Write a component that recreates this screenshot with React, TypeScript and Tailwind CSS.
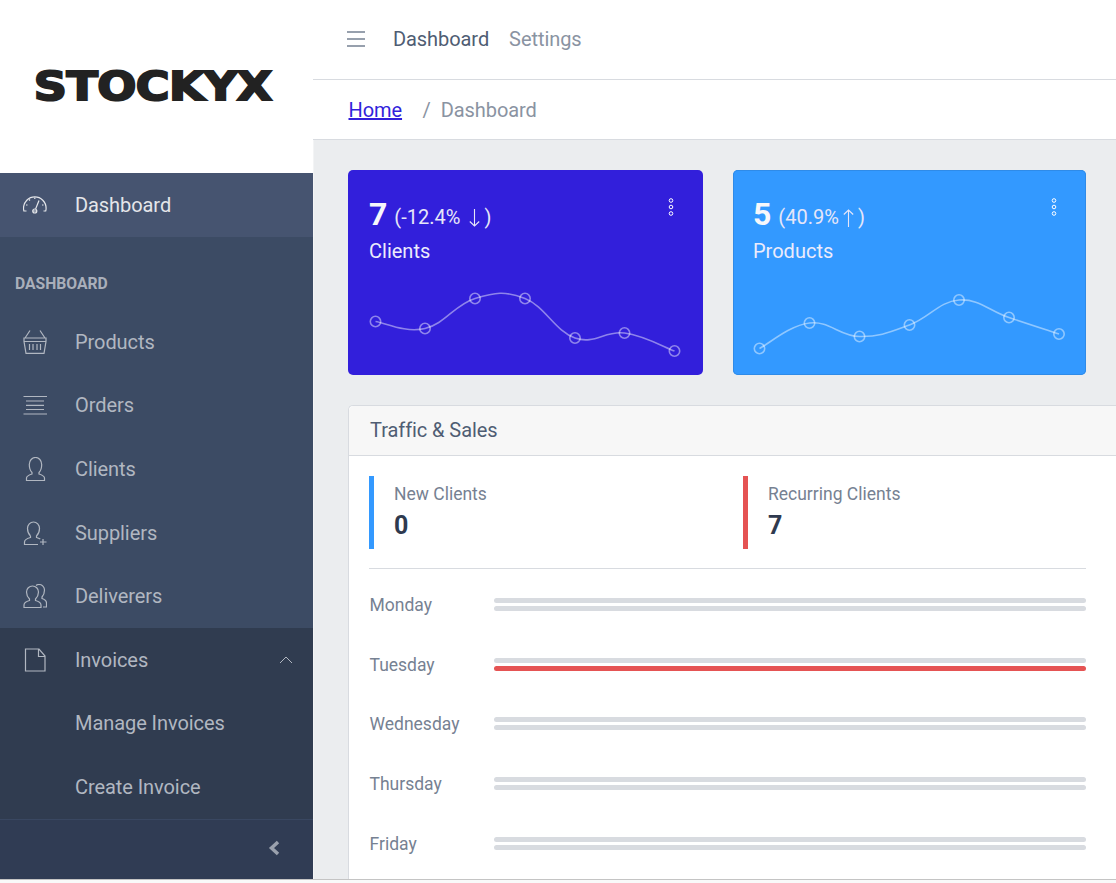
// Stockyx dashboard: sidebar, top bar, breadcrumb, two stat cards and the traffic card.
import type { ReactNode } from 'react';

type Point = [number, number];

const CLIENT_POINTS: Point[] = [[375.5, 320.5], [425, 327.5], [475, 297.5], [525, 297.5], [575, 337], [624.5, 332], [674.5, 350]];
const PRODUCT_POINTS: Point[] = [[759.5, 347.5], [809.5, 322], [859.5, 335.5], [909.5, 324], [959, 299], [1009, 316.5], [1059, 333]];
const DAYS = ['Monday', 'Tuesday', 'Wednesday', 'Thursday', 'Friday'];

// Same sort of curve the chart library draws: cubic segments with tension 0.4.
function smoothPath(points: Point[]) {
  let d = `M${points[0][0]} ${points[0][1]}`;
  for (let i = 0; i < points.length - 1; i++) {
    const p0 = points[Math.max(i - 1, 0)];
    const p1 = points[i];
    const p2 = points[i + 1];
    const p3 = points[Math.min(i + 2, points.length - 1)];
    const c1x = p1[0] + (p2[0] - p0[0]) * 0.2;
    const c1y = p1[1] + (p2[1] - p0[1]) * 0.2;
    const c2x = p2[0] - (p3[0] - p1[0]) * 0.2;
    const c2y = p2[1] - (p3[1] - p1[1]) * 0.2;
    d += ` C${c1x} ${c1y} ${c2x} ${c2y} ${p2[0]} ${p2[1]}`;
  }
  return d;
}

function Icon({ children }: { children: ReactNode }) {
  return (
    <svg viewBox="0 0 24 24" fill="none" stroke="currentColor" strokeWidth="1.2" className="h-6 w-6 shrink-0">
      {children}
    </svg>
  );
}

function NavItem({ icon, label, active, right }: { icon?: ReactNode; label: string; active?: boolean; right?: ReactNode }) {
  return (
    <div className={`flex h-[63.6px] items-center pl-[23px] pr-5 ${active ? 'bg-[#465470] text-[#e4e6ea]' : 'text-[#b1b7c1]'}`}>
      <div className="w-[52px] shrink-0">{icon}</div>
      <span className="text-[20px] tracking-[-0.07px]">{label}</span>
      {right && <div className="ml-auto">{right}</div>}
    </div>
  );
}

function Sidebar() {
  return (
    <aside className="flex w-[313px] shrink-0 flex-col bg-[#3c4b64]">
      <div className="flex h-[173px] items-center justify-center bg-white pb-[1px] pr-[7px]">
        <span className="scale-x-[1.18] font-['DejaVu_Sans',sans-serif] text-[39px] leading-none font-bold tracking-[-0.5px] text-[#222222] [-webkit-text-stroke:2px_#222222]">
          STOCKYX
        </span>
      </div>
      <NavItem
        active
        label="Dashboard"
        icon={
          <Icon>
            <path d="M3.500 18H.9a12 12 0 0 1-.4-2.800 11.300 11.300 0 0 1 22.600 0c0 1-.1 1.900-.4 2.800H20.500M9.500 18h4.500M12.600 16 16 7.500" />
            <circle cx="11.800" cy="18" r="2" />
            <path d="M11.800 4.500V6M6 6.500l1 1M3 12h1.500M19 12h1.500" />
          </Icon>
        }
      />
      <div className="flex h-[73.4px] items-center pl-[15px] pt-[20px] text-[15.7px] font-bold text-[#a9afba]">DASHBOARD</div>
      <NavItem
        label="Products"
        icon={
          <Icon>
            <path d="M1 8h22v3.500L21 23.400H3L1 11.500zM1.500 11.500h21M2 8 7 .5M22 8 17 .5" />
            <path d="M6.500 14v6M10 14v6M14 14v6M17.500 14v6" />
          </Icon>
        }
      />
      <NavItem
        label="Orders"
        icon={
          <Icon>
            <path d="M.5 3.500h23.500M3 8h18M3 12.300h18M3 16.500h18M.5 21h23.500" />
          </Icon>
        }
      />
      <NavItem
        label="Clients"
        icon={
          <Icon>
            <path d="M9 15.500C7 13.500 6.300 10.500 6.300 7.500a5.700 6.500 0 0 1 12.400 0c0 3-.7 6-2.700 8V17c3 1 5.500 2 5.500 4v2.500H3.500V21c0-2 2.500-3 5.500-4z" />
          </Icon>
        }
      />
      <NavItem
        label="Suppliers"
        icon={
          <Icon>
            <path d="M7.500 15C5.500 13 4.500 10.500 4.500 7.500a6 6.500 0 0 1 12 0c0 3-1 5.500-3 7.500v1.500c1.500.4 2.800.9 3.800 1.500M7.500 15v1.500c-3 .8-6 2-6 4.500v2.500H15" />
            <path d="M20 18v6M17 21h6.500" />
          </Icon>
        }
      />
      <NavItem
        label="Deliverers"
        icon={
          <Icon>
            <path d="M6.500 15c-2-2-3-4-3-7a6 6 0 0 1 12 0c0 3-1 5-3 7v1.500c3 .8 5.500 2 5.500 4.500v2.500H1V21c0-2.500 2.500-3.700 5.500-4.500z" />
            <path d="M13 1.500c1-.7 2-1 3-1A5.500 5.500 0 0 1 21.500 6c0 3-.8 5-2.500 7v1.500c2.500.8 4.500 2 4.500 4.500v4H20" />
          </Icon>
        }
      />
      <div className="bg-[#303c50]">
        <NavItem
          label="Invoices"
          icon={
            <Icon>
              <path d="M2.500 1h13.500l6 7v15H2.500zM15.500 1v7.500H22" />
            </Icon>
          }
          right={
            <svg viewBox="0 0 14 8" fill="none" stroke="currentColor" strokeWidth="1" className="h-2 w-[14px]">
              <path d="M1 7l6-6 6 6" />
            </svg>
          }
        />
        <NavItem label="Manage Invoices" />
        <NavItem label="Create Invoice" />
      </div>
      <div className="flex flex-1 items-center justify-end border-t border-[#394761] bg-[#303c54] pb-[3px] pr-[33px] text-[#9aa1ad]">
        <svg viewBox="0 0 12 16" fill="none" stroke="currentColor" strokeWidth="3.500" className="h-4 w-3">
          <path d="M10 2 3.500 8l6.500 6" />
        </svg>
      </div>
    </aside>
  );
}

function TopBar() {
  return (
    <>
      <header className="flex h-[80px] shrink-0 items-center border-b border-[#d8dbe0] bg-white pb-[2px] pl-[34px] text-[20px] tracking-[-0.07px]">
        <svg viewBox="0 0 18 16" fill="none" stroke="#768192" strokeWidth="1.300" className="h-4 w-[18px]">
          <path d="M0 1h18M0 8h18M0 15h18" />
        </svg>
        <span className="ml-[28px] text-[#4f5d73]">Dashboard</span>
        <span className="ml-[20px] text-[#8a93a2]">Settings</span>
      </header>
      <nav className="flex h-[60px] shrink-0 items-center border-b border-[#d8dbe0] bg-white pl-[35.5px] text-[20px] tracking-[-0.07px]">
        <a className="text-[#321fdb] underline">Home</a>
        <span className="ml-[20.5px] text-[#8a93a2]">/</span>
        <span className="ml-[10px] text-[#8a93a2]">Dashboard</span>
      </nav>
    </>
  );
}

function Arrow({ up }: { up?: boolean }) {
  return (
    <svg
      viewBox="0 0 11 18"
      fill="none"
      stroke="currentColor"
      strokeWidth="1.100"
      className={`inline-block h-[18px] w-[11px] align-[-3px] ${up ? 'ml-[4px] mr-[4px]' : 'ml-[8.5px] mr-[4.5px]'}`}
    >
      <path d={up ? 'M5.500 18V1M.8 5.500 5.500 1l4.700 4.500' : 'M5.500 0v17M.8 12.500 5.500 17l4.700-4.500'} />
    </svg>
  );
}

function StatCard({ value, change, up, label, bg, inset, points, viewBox }: {
  value: string;
  change: string;
  up?: boolean;
  label: string;
  bg: string;
  inset: string;
  points: Point[];
  viewBox: string;
}) {
  return (
    <div className={`flex h-[204.5px] flex-col justify-between rounded-[5px] text-white ${bg}`}>
      <div className={`flex justify-between pr-[29px] pt-[21px] ${inset}`}>
        <div>
          <div className="flex h-[44px] items-center">
            <span className="mt-[2px] text-[32px] leading-none font-bold text-[#f7f7fb]">{value}</span>
            <span className="ml-[7px] mt-[8px] text-[20px] leading-none text-[#e6e6f8]">
              ({change}
              <Arrow up={up} />)
            </span>
          </div>
          <div className="mt-[1px] text-[20px] leading-[30px] text-[#ecebfb]">{label}</div>
        </div>
        <svg viewBox="0 0 6 18" fill="none" stroke="currentColor" strokeWidth="1" className="mt-[7px] h-[18px] w-[6px]">
          <circle cx="3" cy="2.500" r="1.800" />
          <circle cx="3" cy="9" r="1.800" />
          <circle cx="3" cy="15.500" r="1.800" />
        </svg>
      </div>
      <svg viewBox={viewBox} className="h-[90px] w-full shrink-0" fill="none" stroke="rgba(255,255,255,0.45)" strokeWidth="1.600">
        <path d={smoothPath(points)} />
        {points.map(([x, y]) => (
          <circle key={x} cx={x} cy={y} r="5.200" />
        ))}
      </svg>
    </div>
  );
}

function Legend({ label, value, bar }: { label: string; value: string; bar: string }) {
  return (
    <div className={`w-[374px] shrink-0 border-l-[5px] pl-[20px] ${bar}`}>
      <div className="pt-[5px] text-[17.5px] leading-[26px] text-[#768192]">{label}</div>
      <div className="mt-[4px] text-[25px] leading-[30px] font-bold text-[#2f3a4f]">{value}</div>
    </div>
  );
}

function DayRow({ day, highlight }: { day: string; highlight?: boolean }) {
  return (
    <div className="flex h-[59.75px] items-center">
      <div className="mt-[1px] w-[125px] shrink-0 pl-[0.5px] text-[17.5px] text-[#768192]">{day}</div>
      <div className="flex flex-1 flex-col gap-[3px]">
        <div className="h-[5px] rounded-[3px] bg-[#d8dbe0]" />
        <div className={`h-[5px] rounded-[3px] ${highlight ? 'bg-[#e55353]' : 'bg-[#d8dbe0]'}`} />
      </div>
    </div>
  );
}

export default function App() {
  return (
    <div className="h-[883px] w-[1116px] overflow-hidden bg-[#f9f9f9] font-['Roboto',sans-serif]">
      <div className="flex h-[880px] border-b border-[#c4c4c4]">
        <Sidebar />
        <div className="flex min-w-0 flex-1 flex-col">
          <TopBar />
          <main className="min-h-0 flex-1 overflow-hidden border-l border-[#f3f4f5] bg-[#ebedef] pl-[34px] pr-[30px] pt-[30px]">
            <div className="grid grid-cols-[355px_1fr] gap-[30px]">
              <StatCard
                value="7"
                change="-12.4%"
                label="Clients"
                bg="bg-[#321fdb]"
                inset="pl-[21px]"
                points={CLIENT_POINTS}
                viewBox="348 284 355 90"
              />
              <StatCard
                value="5"
                change="40.9%"
                up
                label="Products"
                bg="bg-[#3399ff] shadow-[inset_0_0_0_1px_#2f8be8]"
                inset="pl-[20px]"
                points={PRODUCT_POINTS}
                viewBox="733 284 353 90"
              />
            </div>
            <section className="mr-[-30px] mt-[30px] mb-[40px] rounded-l-[5px] border border-r-0 border-[#d8dbe0] bg-white pb-[40px]">
              <div className="flex h-[50px] items-center rounded-tl-[5px] border-b border-[#d8dbe0] bg-[#f7f7f7] pl-[21px] text-[20px] tracking-[-0.07px] text-[#4f5d73]">
                Traffic &amp; Sales
              </div>
              <div className="pl-[20px] pr-[30px] pt-[20px]">
                <div className="flex h-[73px]">
                  <Legend label="New Clients" value="0" bar="border-[#3399ff]" />
                  <Legend label="Recurring Clients" value="7" bar="border-[#e55353]" />
                </div>
                <div className="mt-[19px] mb-[6px] border-t border-[#d8dbe0]" />
                {DAYS.map((day) => (
                  <DayRow key={day} day={day} highlight={day === 'Tuesday'} />
                ))}
              </div>
            </section>
          </main>
        </div>
      </div>
    </div>
  );
}
